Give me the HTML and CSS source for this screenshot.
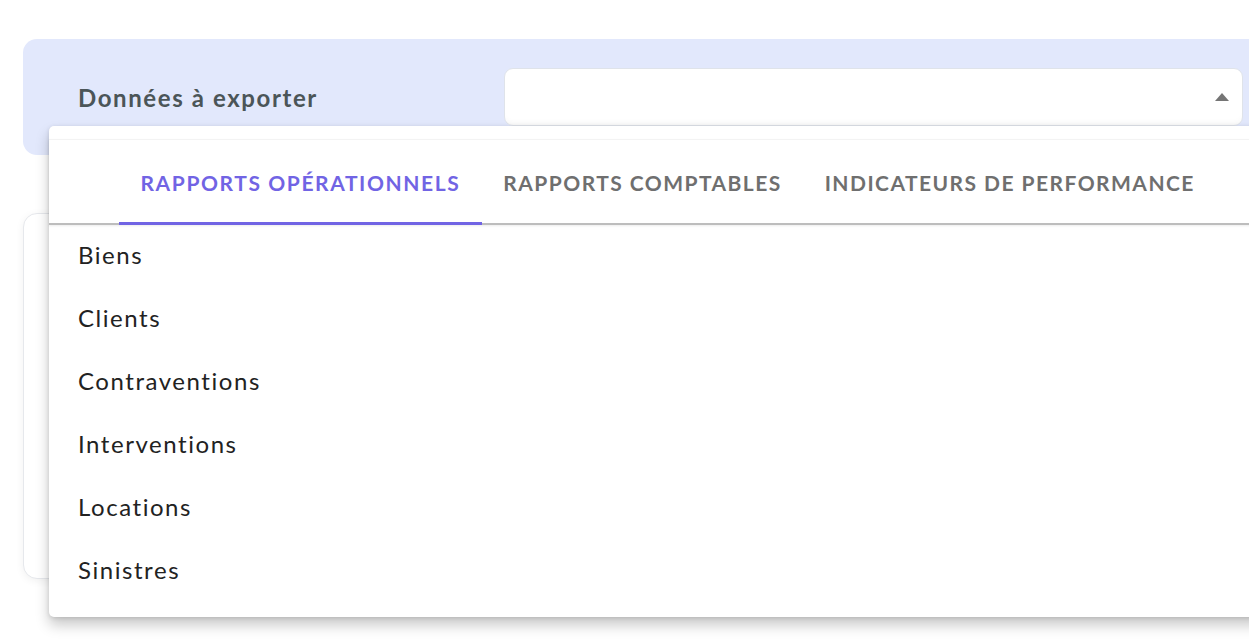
FILE: index.html
```html
<!DOCTYPE html>
<html lang="fr">
<head>
<meta charset="utf-8">
<title>Export</title>
<link rel="stylesheet" href="styles.css">
</head>
<body>
<div class="page">
  <section class="filter-bar">
    <div class="field-label">Données à exporter</div>
    <div class="select">
      <span class="select-value"></span>
      <svg class="caret" width="14" height="8" viewBox="0 0 14 8"><path d="M0 8 L7 0 L14 8 Z" fill="#757575"/></svg>
    </div>
  </section>
  <section class="card"></section>

  <div class="dropdown">
    <div class="tabs">
      <div class="tab active">Rapports opérationnels</div>
      <div class="tab">Rapports comptables</div>
      <div class="tab">Indicateurs de performance</div>
    </div>
    <ul class="options">
      <li>Biens</li>
      <li>Clients</li>
      <li>Contraventions</li>
      <li>Interventions</li>
      <li>Locations</li>
      <li>Sinistres</li>
    </ul>
  </div>
</div>
</body>
</html>
```

FILE: styles.css
```css
* { box-sizing: border-box; }
html, body {
  margin: 0;
  padding: 0;
  background: #ffffff;
  font-family: Lato, "Open Sans", sans-serif;
  overflow: hidden;
}
.page {
  position: relative;
  width: 1249px;
  height: 643px;
  padding: 39px 0 0 23px;
}
.filter-bar {
  display: flex;
  align-items: center;
  height: 116px;
  background: #e2e8fc;
  border-radius: 14px 0 0 14px;
  padding: 0 26px 0 55px;
  margin-right: -20px;
}
.field-label {
  width: 426px;
  font-size: 24px;
  font-weight: 700;
  letter-spacing: 1.6px;
  color: #4b5558;
  margin-top: 0;
}
.select {
  flex: 1;
  height: 58px;
  background: #fff;
  border: 1px solid #dfe3ea;
  border-radius: 9px;
  display: flex;
  align-items: center;
  justify-content: flex-end;
  padding-right: 13px;
  box-shadow: inset 0 -6px 6px -4px rgba(0,0,0,0.03);
}
.card {
  margin-top: 58px;
  height: 366px;
  margin-right: -20px;
  background: #fff;
  border: 1px solid #e6e8ec;
  border-radius: 14px 0 0 14px;
  box-shadow: 0 2px 8px rgba(0,0,0,0.06);
}
.dropdown {
  position: absolute;
  left: 49px;
  top: 126px;
  width: 1220px;
  height: 491px;
  background: #fff;
  border-radius: 5px;
  box-shadow: 0 8px 14px rgba(0,0,0,0.22), 0 1px 4px rgba(0,0,0,0.12);
  border-top: 13px solid #fff;
}
.tabs {
  display: flex;
  padding-left: 70px;
  height: 86px;
  border-top: 1px solid #f3f3f3;
  border-bottom: 2px solid #bdbdbd;
  box-shadow: 0 1px 2px rgba(0,0,0,0.08);
}
.tab {
  padding: 3px 21.5px 0;
  display: flex;
  align-items: center;
  font-size: 21px;
  font-weight: 700;
  text-transform: uppercase;
  color: #6f6f6f;
  letter-spacing: 1.45px;
  border-bottom: 3px solid transparent;
  margin-bottom: -2px;
}
.tab.active {
  color: #7164e4;
  letter-spacing: 1.6px;
  border-bottom-color: #7164e4;
}
.options {
  list-style: none;
  margin: -2px 0 0;
  padding: 0;
}
.options li {
  height: 63px;
  padding-left: 29px;
  display: flex;
  align-items: center;
  font-size: 24px;
  letter-spacing: 1.55px;
  color: #222;
}
```
